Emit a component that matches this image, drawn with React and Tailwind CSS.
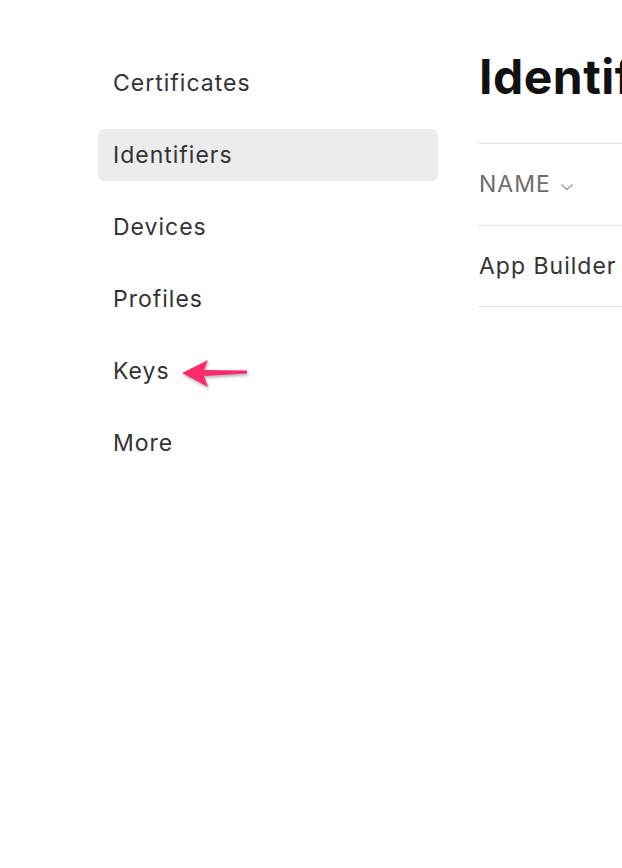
import React from "react";

const navItems = ["Certificates", "Identifiers", "Devices", "Profiles", "Keys", "More"];

function PinkArrow() {
  return (
    <svg width="70" height="34" viewBox="0 0 70 34" className="absolute left-[82px] top-[13px]" style={{ filter: "drop-shadow(1px 2px 1.5px rgba(0,0,0,0.3))" }}>
      <path d="M2 15 L28 2 L24 12 L67 12.5 L67 15.5 L24 18 L28 29 Z" fill="#ff2b6c" />
    </svg>
  );
}

export default function App() {
  return (
    <div className="w-[622px] h-[868px] bg-white overflow-hidden flex" style={{ fontFamily: "Inter, 'Noto Sans', sans-serif" }}>
      {/* sidebar */}
      <nav className="pl-[98px] pt-[57px] w-[438px] shrink-0 flex flex-col gap-[20px]">
        {navItems.map((item) => (
          <div
            key={item}
            className={`relative h-[52px] w-[340px] flex items-center pl-[15px] rounded-md text-[23px] tracking-[1px] text-[#333333] ${
              item === "Identifiers" ? "bg-[#ececec]" : ""
            }`}
          >
            {item}
            {item === "Keys" && <PinkArrow />}
          </div>
        ))}
      </nav>

      {/* main */}
      <main className="pl-[41px] flex-1 min-w-0 overflow-hidden">
        <h1 className="pt-[49px] h-[143px] text-[48px] font-bold text-[#111111] whitespace-nowrap leading-[56px] tracking-[0.5px]">
          Identifiers
        </h1>
        <div className="border-t border-[#e0e0e0] h-[82px] flex items-center gap-[9px] text-[23px] tracking-[1px] text-[#6e6e6e]">
          NAME
          <svg width="14" height="10" viewBox="0 0 14 10" className="mt-[4px]">
            <path d="M1.5 2.5 L7 7.5 L12.5 2.5" fill="none" stroke="#9a9a9a" strokeWidth="1.3" />
          </svg>
        </div>
        <div className="border-t border-b border-[#e0e0e0] h-[82px] flex items-center text-[23px] tracking-[1px] text-[#333333] whitespace-nowrap">
          App Builder
        </div>
      </main>
    </div>
  );
}
